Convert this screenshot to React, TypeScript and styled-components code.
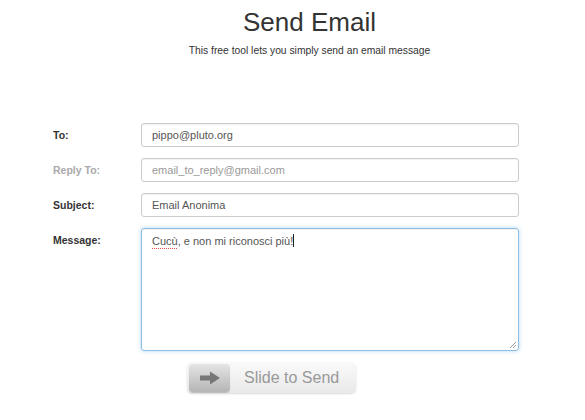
import React from 'react'
import styled, { createGlobalStyle } from 'styled-components'

const Global = createGlobalStyle`
  html, body { margin:0; padding:0; background:#fff; }
  body { font-family: "Liberation Sans", Arial, sans-serif; color:#333; }
`

type Field = { label: string, value: string, muted?: boolean }

const fields: Field[] = [
  { label: 'To:', value: 'pippo@pluto.org' },
  { label: 'Reply To:', value: 'email_to_reply@gmail.com', muted: true },
  { label: 'Subject:', value: 'Email Anonima' },
]

export default function App() {
  return (
    <Page>
      <Global />
      <Header>
        <Title>Send Email</Title>
        <Subtitle>This free tool lets you simply send an email message</Subtitle>
      </Header>

      <Form>
        {fields.map(f => (
          <Row key={f.label}>
            <Label muted={f.muted}>{f.label}</Label>
            <Input muted={f.muted}>{f.value}</Input>
          </Row>
        ))}
        <Row top>
          <Label top>Message:</Label>
          <MessageBox>
            <Misspelled>Cucù</Misspelled>, e non mi riconosci più!<Caret />
            <Grip width='8' height='8' viewBox='0 0 8 8'>
              <path d='M7 1 L1 7 M7 4 L4 7' stroke='#999' strokeWidth='1' />
            </Grip>
          </MessageBox>
        </Row>
      </Form>

      <Slider>
        <Handle>
          <svg width='22' height='14' viewBox='0 0 22 14'>
            <path d='M1 4.5 H11 V0.5 L21 7 L11 13.5 V9.5 H1 Z' fill='#777' />
          </svg>
        </Handle>
        <SliderText>Slide to Send</SliderText>
      </Slider>
    </Page>
  )
}

const Page = styled.div` width:585px; height:420px; overflow:hidden; `

const Header = styled.div` display:flex; flex-direction:column; align-items:center; padding:6px 0 0 34px; `
const Title = styled.h1` margin:0; font-weight:normal; font-size:26px; line-height:32px; color:#333; `
const Subtitle = styled.p` margin:7px 0 0; font-size:10.3px; color:#333; `

const Form = styled.div` display:flex; flex-direction:column; gap:11px; margin:67px 0 0 53px; width:466px; `
const Row = styled.div<{ top?: boolean }>` display:flex; align-items:${p => p.top ? 'flex-start' : 'center'}; `
const Label = styled.div<{ muted?: boolean, top?: boolean }>`
  width:88px; flex:none; font-size:10.5px; font-weight:bold;
  color:${p => p.muted ? '#aaa' : '#333'};
  margin-top:${p => p.top ? '6px' : '0'};
`
const Input = styled.div<{ muted?: boolean }>`
  flex:1; box-sizing:border-box; height:24px; display:flex; align-items:center; padding:0 10px;
  border:1px solid #ccc; border-radius:3px; box-shadow:inset 0 1px 1px rgba(0,0,0,0.06);
  font-size:11px; color:${p => p.muted ? '#999' : '#555'};
`
const MessageBox = styled.div`
  position:relative; flex:1; box-sizing:border-box; height:123px; padding:4px 10px;
  border:1px solid #8ebfe3; border-radius:3px;
  box-shadow:inset 0 1px 1px rgba(0,0,0,0.06), 0 0 4px rgba(102,175,233,0.5);
  font-size:11px; color:#555; line-height:16px;
`
const Misspelled = styled.span` text-decoration:underline dotted #e05050; text-decoration-thickness:1px; text-underline-offset:3px; `
const Caret = styled.span` display:inline-block; width:1px; height:13px; background:#222; vertical-align:-2px; `
const Grip = styled.svg` position:absolute; right:1px; bottom:1px; `

const Slider = styled.div`
  display:flex; align-items:center; gap:14px; box-sizing:border-box;
  width:169px; height:31px; margin:11px 0 0 187px; padding:0 2px;
  border-radius:5px; background:linear-gradient(#fafafa, #e9e9e9);
  box-shadow:0 1px 2px rgba(0,0,0,0.15);
`
const Handle = styled.div`
  width:41px; height:29px; flex:none; display:flex; align-items:center; justify-content:center;
  border-radius:4px; background:linear-gradient(#e6e6e6, #b5b5b5);
  box-shadow:inset 0 1px 0 rgba(255,255,255,0.7), 0 1px 1px rgba(0,0,0,0.2);
`
const SliderText = styled.span` font-size:16px; color:#999; `
